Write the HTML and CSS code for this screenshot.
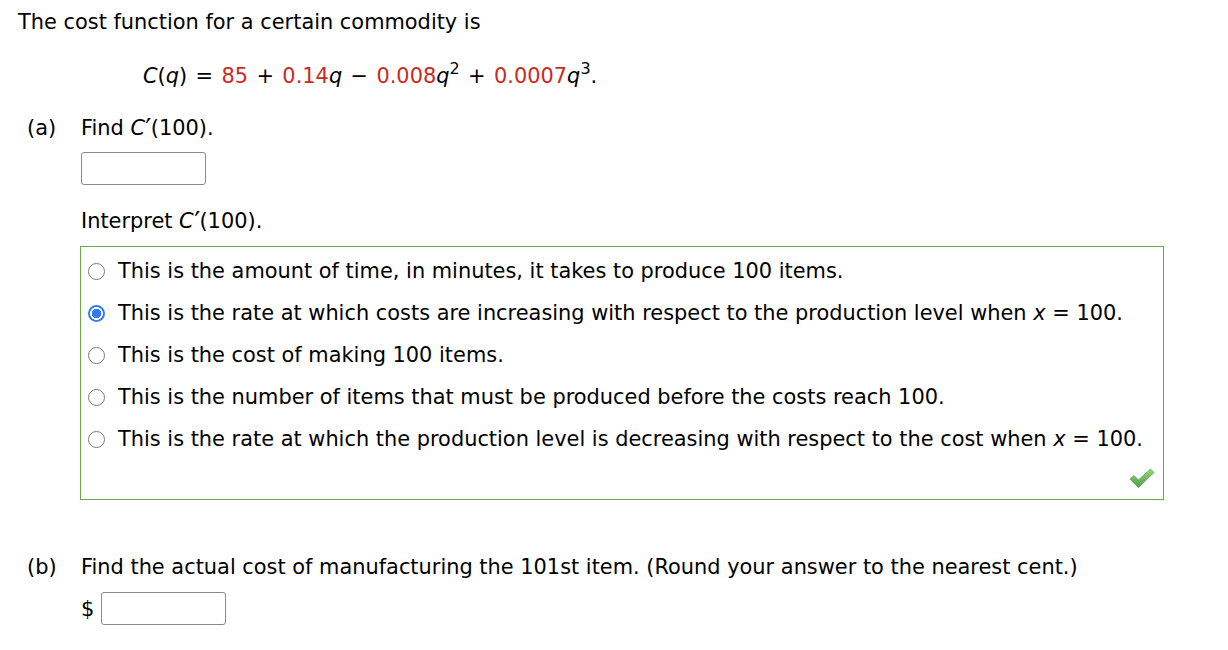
FILE: index.html
```html
<!DOCTYPE html>
<html>
<head>
<meta charset="utf-8">
<link rel="stylesheet" href="styles.css">
</head>
<body>
<div class="page">
  <p class="intro">The cost function for a certain commodity is</p>
  <p class="formula"><i>C</i>(<i>q</i>)<span class="op">=</span><span class="red">85</span><span class="op">+</span><span class="red">0.14</span><i>q</i><span class="op">−</span><span class="red">0.008</span><i>q</i><sup>2</sup><span class="op">+</span><span class="red">0.0007</span><i>q</i><sup>3</sup>.</p>

  <div class="part part-a">
    <div class="part-head"><span class="label">(a)</span><span>Find <i>C</i><span class="prime">′</span>(100).</span></div>
    <div class="part-body">
      <div class="answer-box"></div>
      <p class="interpret">Interpret <i>C</i><span class="prime">′</span>(100).</p>
    </div>
  </div>

  <div class="choices">
    <div class="choice"><span class="radio"></span><span>This is the amount of time, in minutes, it takes to produce 100 items.</span></div>
    <div class="choice"><span class="radio checked"></span><span>This is the rate at which costs are increasing with respect to the production level when <i>x</i> = 100.</span></div>
    <div class="choice"><span class="radio"></span><span>This is the cost of making 100 items.</span></div>
    <div class="choice"><span class="radio"></span><span>This is the number of items that must be produced before the costs reach 100.</span></div>
    <div class="choice"><span class="radio"></span><span>This is the rate at which the production level is decreasing with respect to the cost when <i>x</i> = 100.</span></div>
    <div class="check-row">
      <svg class="check" width="26" height="21" viewBox="0 0 26 21">
        <defs>
          <linearGradient id="g" x1="0" y1="0" x2="0" y2="1">
            <stop offset="0" stop-color="#9ad486"/>
            <stop offset="1" stop-color="#4f9c43"/>
          </linearGradient>
        </defs>
        <path d="M1 11 L5 7.5 L9.5 12 L21.5 1 L25 4.5 L9.5 19.5 Z" fill="url(#g)" stroke="#5aa64b" stroke-width="0.8" stroke-linejoin="round"/>
      </svg>
    </div>
  </div>

  <div class="part part-b">
    <div class="part-head"><span class="label">(b)</span><span>Find the actual cost of manufacturing the 101st item. (Round your answer to the nearest cent.)</span></div>
    <div class="part-body dollar-row">
      <span class="dollar">$</span><div class="answer-box small"></div>
    </div>
  </div>
</div>
</body>
</html>
```

FILE: styles.css
```css
html, body {
  margin: 0;
  padding: 0;
  background: #ffffff;
}
.page {
  font-family: "DejaVu Sans", Verdana, sans-serif;
  font-size: 20.9px;
  color: #000;
  line-height: 24px;
  padding-top: 10px;
}
p { margin: 0; }
i { font-style: italic; }
.red { color: #cc2a1f; }
sup {
  font-size: 16px;
  line-height: 0;
  vertical-align: 9px;
}
.op {
  display: inline-block;
  margin: 0 8.4px;
}
.prime {
  display: inline-block;
  margin-left: 1px;
  transform: scale(1.3) translateY(1px);
}
.intro {
  padding-left: 18px;
}
.formula {
  margin-top: 30px;
  padding-left: 143px;
}
.part {
  padding-left: 27px;
}
.part-a { margin-top: 28px; }
.part-head {
  display: flex;
}
.label {
  width: 54px;
  flex: none;
}
.part-body {
  padding-left: 54px;
}
.answer-box {
  margin-top: 12px;
  width: 123px;
  height: 31px;
  border: 1px solid #8a8a8a;
  border-radius: 3px;
  background: #fff;
}
.interpret {
  margin-top: 24px;
}
.choices {
  margin: 13px 0 0 80px;
  width: 1082px;
  border: 1px solid #6ea746;
  padding-top: 3px;
  height: 249px;
}
.choice {
  height: 42px;
  display: flex;
  align-items: center;
  padding-left: 7px;
  gap: 13px;
}
.radio {
  width: 15px;
  height: 15px;
  border: 1px solid #7a7a7a;
  border-radius: 50%;
  background: #fff;
  flex: none;
}
.radio.checked {
  width: 17px;
  height: 17px;
  border: none;
  background: radial-gradient(circle, #3478f6 0 4.5px, #fff 5px 6.2px, #3478f6 6.7px);
}
.check-row {
  display: flex;
  justify-content: flex-end;
  padding: 8px 8px 0 0;
}
.part-b { margin-top: 55px; }
.dollar-row {
  display: flex;
  align-items: center;
  margin-top: 13px;
}
.dollar {
  width: 20px;
}
.answer-box.small {
  margin-top: 0;
}
```
